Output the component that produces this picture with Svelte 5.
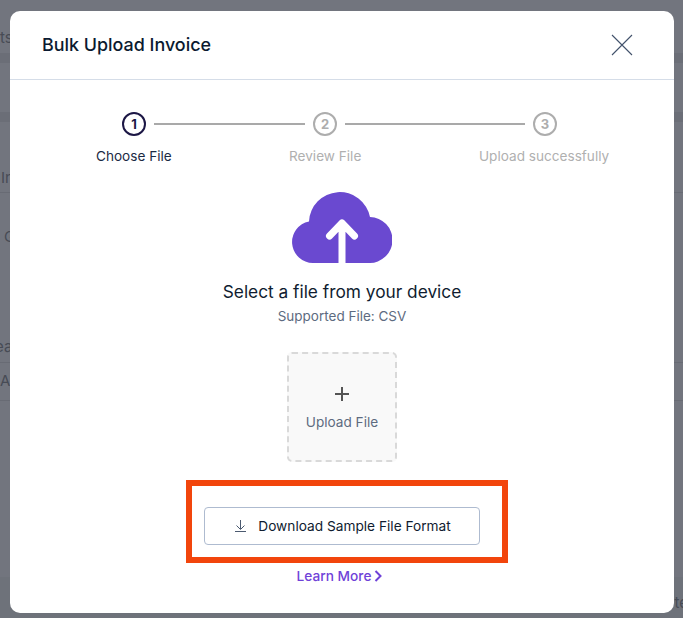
<script>
	const steps = [
		{ n: 1, label: "Choose File", active: true },
		{ n: 2, label: "Review File", active: false },
		{ n: 3, label: "Upload successfully", active: false },
	];
</script>

<div class="page">
	<div class="row r-top"><span>ts</span></div>
	<div class="strip"></div>
	<div class="row r-gap"></div>
	<div class="strip"></div>
	<div class="row r-invoice"><span>In</span></div>
	<div class="row r-group">
		<span class="g">G</span>
		<span class="ea">ea</span>
	</div>
	<div class="row r-all"><span>Al</span></div>
	<div class="row r-empty"></div>
	<div class="row r-foot"><span>te</span></div>
</div>

<div class="modal">
	<header>
		<h2>Bulk Upload Invoice</h2>
		<button class="close" aria-label="Close">
			<svg width="22" height="22" viewBox="0 0 22 22" fill="none" stroke="#42526b" stroke-width="1.1">
				<path d="M1 1l20 20M21 1L1 21" />
			</svg>
		</button>
	</header>

	<div class="body">
		<ol class="steps">
			{#each steps as s}
				<li class="step" class:active={s.active}>
					<span class="num">{s.n}</span>
					<span class="label">{s.label}</span>
				</li>
			{/each}
		</ol>

		<svg class="cloud" width="100" height="71" viewBox="0 0 100 71">
			<path
				fill="#6a49d0"
				d="M21 71A21 21 0 0 1 17 29.400A30.800 30.800 0 0 1 78 25A23 23 0 0 1 77 71Z"
			/>
			<path d="M50 71V31M37.500 44L50 31L62.500 44" fill="none" stroke="#fff" stroke-width="7" stroke-linecap="round" stroke-linejoin="round" />
		</svg>

		<p class="select">Select a file from your device</p>
		<p class="supported">Supported File: CSV</p>

		<button class="upload">
			<svg width="16" height="16" viewBox="0 0 16 16" fill="none" stroke="#555" stroke-width="2">
				<path d="M8 1v14M1 8h14" />
			</svg>
			<span>Upload File</span>
		</button>

		<div class="highlight">
			<button class="download">
				<svg width="11" height="12" viewBox="0 0 11 12" fill="none" stroke="#4b5a70" stroke-width="1">
					<path d="M5.500 0v9M1.500 5.500l4 4 4-4M0 11.500h11" />
				</svg>
				Download Sample File Format
			</button>
		</div>

		<a class="learn" href="#learn">Learn More
			<svg width="8" height="12" viewBox="0 0 8 12" fill="none" stroke="#6f42d8" stroke-width="2">
				<path d="M1.500 1l5 5-5 5" />
			</svg>
		</a>
	</div>
</div>

<style>
	:global(body) {
		margin: 0;
		background: #72757e;
		font-family: Inter, "Liberation Sans", sans-serif;
		overflow: hidden;
	}
	.page {
		height: 618px;
		display: flex;
		flex-direction: column;
		overflow: hidden;
		background: #72757e;
		color: #474b55;
		font-size: 15px;
	}
	.row {
		box-sizing: border-box;
		display: flex;
		flex-shrink: 0;
	}
	.strip {
		height: 10px;
		background: #6b6e77;
		flex-shrink: 0;
	}
	.r-top { height: 53px; padding-top: 28px; }
	.r-gap { height: 49px; }
	.r-invoice { height: 71px; padding: 46px 0 0 1px; border-bottom: 1px solid #686b74; }
	.r-group {
		height: 170px;
		flex-direction: column;
		border-bottom: 1px solid #686b74;
	}
	.g { margin: 35px 0 0 4px; line-height: 18px; }
	.ea { margin: 92px 0 0 -5px; line-height: 18px; }
	.r-all { height: 38px; padding-top: 8px; border-bottom: 1px solid #686b74; }
	.r-empty { height: 176px; }
	.r-foot {
		flex: 1;
		background: #6e727a;
		justify-content: flex-end;
		padding-top: 16px;
	}
	.r-foot span { margin-right: -5px; }

	.modal {
		position: absolute;
		left: 10px;
		top: 11px;
		width: 664px;
		height: 602px;
		background: #fff;
		border-radius: 10px;
		display: flex;
		flex-direction: column;
		color: #0c1a2e;
	}
	header {
		height: 69px;
		box-sizing: border-box;
		border-bottom: 1px solid #d5dde8;
		display: flex;
		align-items: center;
		justify-content: space-between;
		padding: 0 41px 0 32px;
		flex-shrink: 0;
	}
	h2 {
		margin: 0 0 2px;
		font-size: 17.900px;
		font-weight: 500;
		color: #0b1a30;
	}
	.close {
		border: 0;
		background: none;
		padding: 0;
		display: flex;
	}
	.body {
		display: flex;
		flex-direction: column;
		align-items: center;
	}
	.steps {
		list-style: none;
		margin: 32px 0 0 65px;
		padding: 0;
		display: grid;
		grid-template-columns: 191px 220px 140px;
		width: 551px;
		align-self: flex-start;
	}
	.step {
		display: flex;
		flex-direction: column;
		align-items: flex-start;
		position: relative;
		font-size: 13.600px;
		color: #b0b0b0;
	}
	.step:nth-child(1) .label { margin-left: 21px; }
	.step:nth-child(2) .label { margin-left: 23px; }
	.step:nth-child(3) .label { margin-left: -7px; }
	.step:not(:last-child)::after {
		content: "";
		position: absolute;
		top: 11px;
		height: 2px;
		background: #a9a9a9;
	}
	.step:nth-child(1)::after { left: 79px; width: 151px; }
	.step:nth-child(2)::after { left: 79px; width: 180px; }
	.num {
		width: 24px;
		height: 24px;
		margin-left: 47px;
		box-sizing: border-box;
		border: 2px solid #adadad;
		border-radius: 50%;
		display: flex;
		align-items: center;
		justify-content: center;
		font-size: 13px;
		font-weight: 700;
		color: #adadad;
	}
	.label {
		margin-top: 12px;
		line-height: 16px;
		white-space: nowrap;
	}
	.step.active { color: #1b2a44; }
	.step.active .num {
		border-color: #1c1745;
		color: #1c1745;
	}
	.cloud {
		margin-top: 28px;
		display: block;
	}
	.select {
		margin: 19px 0 0;
		font-size: 17.300px;
		line-height: 20px;
		color: #0f1c30;
	}
	.supported {
		margin: 6px 0 0;
		font-size: 13.500px;
		line-height: 16px;
		color: #5d6b80;
	}
	.upload {
		margin-top: 28px;
		width: 110px;
		height: 110px;
		box-sizing: border-box;
		background: #f9f9f9;
		border: 2px dashed #d9d9d9;
		border-radius: 5px;
		display: flex;
		flex-direction: column;
		align-items: center;
		padding: 32px 0 0;
		font: inherit;
		font-size: 13.600px;
		color: #5d6b80;
	}
	.upload span {
		margin-top: 12px;
		line-height: 16px;
	}
	.highlight {
		margin: 18px 0 0 10px;
		width: 322px;
		height: 83px;
		box-sizing: border-box;
		border: 6px solid #f2450c;
		display: flex;
		padding: 21px 0 0 12px;
	}
	.download {
		width: 276px;
		height: 38px;
		box-sizing: border-box;
		background: #fff;
		border: 1px solid #aebbd0;
		border-radius: 4px;
		display: flex;
		align-items: center;
		justify-content: center;
		gap: 12px;
		padding: 0 0 0 2px;
		font: inherit;
		font-size: 13.700px;
		color: #0f1c30;
	}
	.learn {
		margin: 5px 0 0 -5px;
		font-size: 13.700px;
		line-height: 16px;
		font-weight: 500;
		color: #6f42d8;
		text-decoration: none;
		display: flex;
		align-items: center;
		gap: 3px;
	}
</style>
